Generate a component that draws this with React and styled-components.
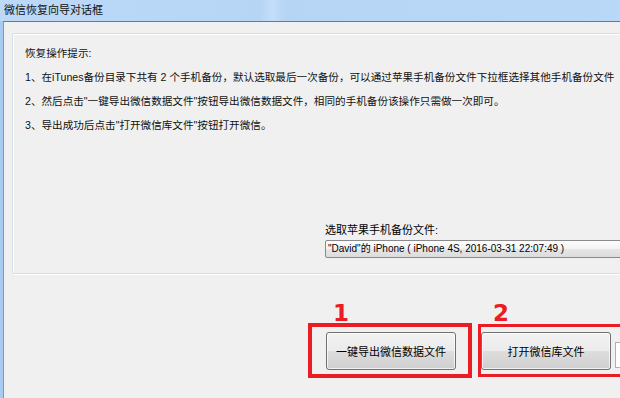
import React from 'react';
import styled, {createGlobalStyle} from "styled-components";

const Global = createGlobalStyle`
    html, body {
        margin: 0;
        padding: 0;
        background: #f0f0f0;
    }
    body {
        font-family: "Liberation Sans", "Noto Sans CJK SC", sans-serif;
        color: #000;
    }
`;

const tips = [
    '1、在iTunes备份目录下共有 2 个手机备份，默认选取最后一次备份，可以通过苹果手机备份文件下拉框选择其他手机备份文件',
    '2、然后点击"一键导出微信数据文件"按钮导出微信数据文件，相同的手机备份该操作只需做一次即可。',
    '3、导出成功后点击"打开微信库文件"按钮打开微信。',
];

const App = () => {
    return (
        <Window>
            <Global/>
            <TitleBar>微信恢复向导对话框</TitleBar>
            <Frame>
                <Content>
                    <GroupBox>
                        <Tips>
                            <TipLine>恢复操作提示:</TipLine>
                            {tips.map((t, i) => (
                                <TipLine key={i}>{t}</TipLine>
                            ))}
                        </Tips>
                        <ComboField>
                            <ComboLabel>选取苹果手机备份文件:</ComboLabel>
                            <Combo>"David"的 iPhone ( iPhone 4S, 2016-03-31 22:07:49 )</Combo>
                        </ComboField>
                    </GroupBox>
                    <ButtonRow>
                        <Highlight thick={4} pad="5px 12px 4px 14px">
                            <Mark left={21}>1</Mark>
                            <Button>一键导出微信数据文件</Button>
                        </Highlight>
                        <Highlight thick={3} pad="5px 0 4px 0" shift={1}>
                            <Mark left={12}>2</Mark>
                            <Button>打开微信库文件</Button>
                            <Stub/>
                        </Highlight>
                    </ButtonRow>
                </Content>
            </Frame>
        </Window>
    );
}
export default App;

const Window = styled.div`
    width: 620px;
    height: 398px;
    overflow: hidden;
    display: flex;
    flex-direction: column;
    background: #b9d7f6;
`;

const TitleBar = styled.div`
    height: 21px;
    flex-shrink: 0;
    padding-left: 4px;
    font-size: 11px;
    line-height: 20px;
    color: #111;
    background: linear-gradient(90deg, #bcd9f7 0%, #b6d5f5 42%, #c3def8 44%, #b6d5f5 46%, #b9d8f7 100%);
`;

const Frame = styled.div`
    flex: 1;
    display: flex;
    padding-left: 3px;
    background: linear-gradient(90deg, #a9cbef, #c6e0fa);
`;

const Content = styled.div`
    flex: 1;
    min-width: 0;
    background: #f0f0f0;
    border-left: 1px solid #7f98b3;
    border-top: 1px solid #5f7c9b;
    padding: 11px 0 0 8px;
    display: flex;
    flex-direction: column;
`;

const GroupBox = styled.section`
    width: 660px;
    height: 241px;
    box-sizing: border-box;
    border: 1px solid #d5dfe5;
    border-radius: 2px;
    box-shadow: inset 1px 1px 0 #fff, 1px 1px 0 #fff;
    padding: 7px 0 15px 12px;
    display: flex;
    flex-direction: column;
    justify-content: space-between;
`;

const Tips = styled.div`
    display: flex;
    flex-direction: column;
`;

const TipLine = styled.div`
    font-size: 10.6px;
    line-height: 24px;
    white-space: nowrap;
    color: #111;
`;

const ComboField = styled.div`
    margin-left: 300px;
    display: flex;
    flex-direction: column;
    gap: 2px;
`;

const ComboLabel = styled.div`
    font-size: 11px;
    line-height: 16px;
`;

const Combo = styled.div`
    height: 16px;
    border: 1px solid #8a8a8a;
    border-radius: 2px;
    padding-left: 2px;
    font-size: 10px;
    line-height: 16px;
    white-space: nowrap;
    background: linear-gradient(#fdfdfd 0%, #f3f3f3 50%, #e6e6e6 51%, #dcdcdc 100%);
`;

const ButtonRow = styled.div`
    display: flex;
    align-items: flex-start;
    gap: 6px;
    margin-top: 49px;
    padding-left: 296px;
`;

const Highlight = styled.div`
    position: relative;
    flex-shrink: 0;
    display: flex;
    align-items: flex-start;
    gap: 4px;
    border: ${p => p.thick}px solid #ec1c24;
    padding: ${p => p.pad};
    margin-top: ${p => p.shift || 0}px;
`;

const Mark = styled.span`
    position: absolute;
    left: ${p => p.left}px;
    top: -24px;
    font-family: "DejaVu Sans", "Liberation Sans", sans-serif;
    font-weight: 700;
    font-size: 23px;
    line-height: 20px;
    color: #ec1c24;
`;

const Button = styled.button`
    width: 130px;
    height: 38px;
    border: 1px solid #707070;
    border-radius: 3px;
    padding: 0;
    font-family: "Liberation Sans", "Noto Sans CJK SC", sans-serif;
    font-size: 11px;
    color: #000;
    background: linear-gradient(#f2f2f2 0%, #ebebeb 50%, #dddddd 51%, #cfcfcf 100%);
    box-shadow: inset 0 0 0 1px rgba(255, 255, 255, 0.7);
`;

const Stub = styled.div`
    width: 60px;
    height: 24px;
    margin-top: 10px;
    border: 1px solid #b0b0b0;
    background: #fff;
`;
